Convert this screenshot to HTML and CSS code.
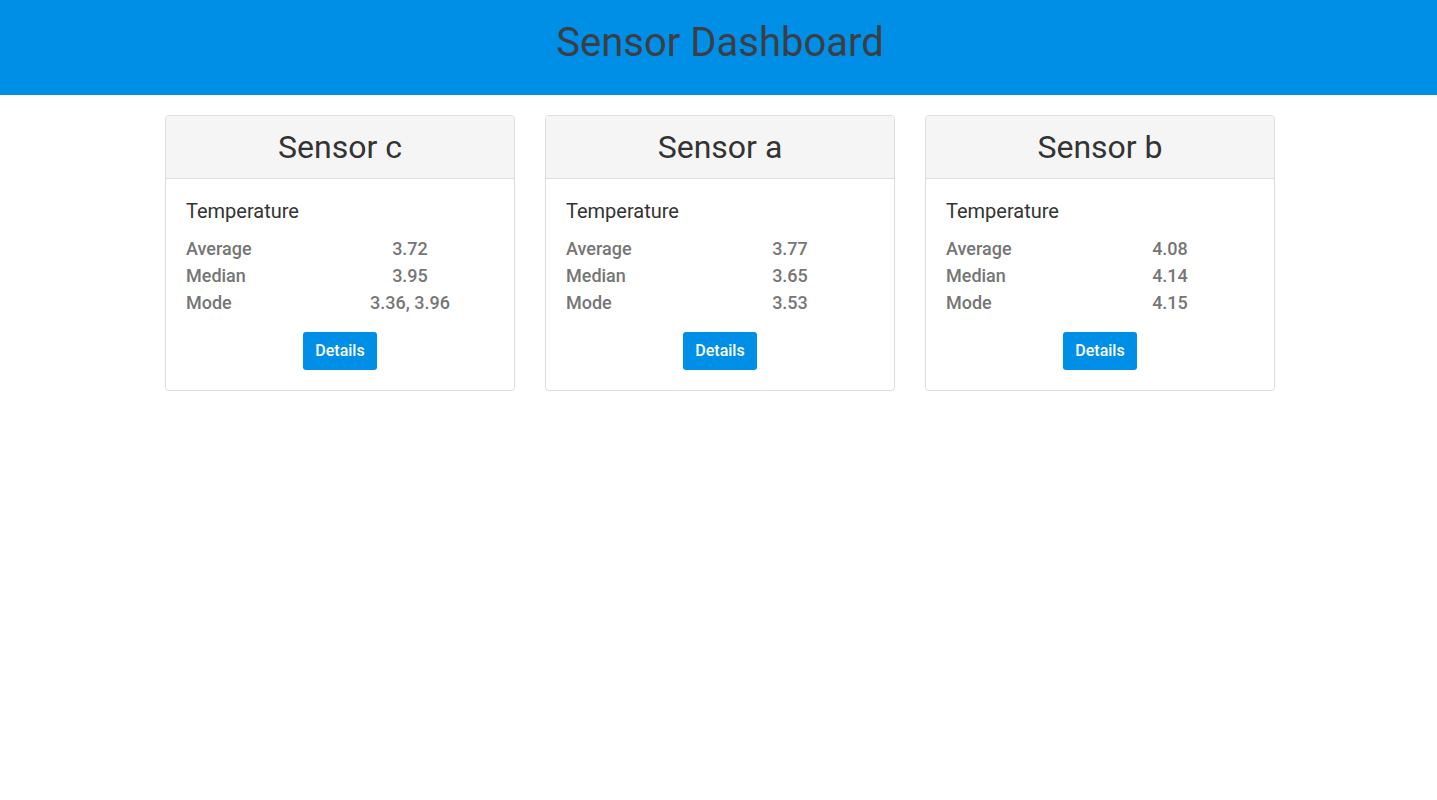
FILE: index.html
```html
<!DOCTYPE html>
<html>
<head>
<meta charset="utf-8">
<link rel="stylesheet" href="styles.css">
</head>
<body>
<header class="topbar"><h1 class="title">Sensor Dashboard</h1></header>
<main class="cards">
  <section class="card">
    <div class="card-head"><h2>Sensor c</h2></div>
    <div class="card-body">
      <h3 class="metric">Temperature</h3>
      <div class="stats">
        <span class="label">Average</span><span class="value">3.72</span>
        <span class="label">Median</span><span class="value">3.95</span>
        <span class="label">Mode</span><span class="value">3.36, 3.96</span>
      </div>
      <div class="actions"><button class="btn">Details</button></div>
    </div>
  </section>
  <section class="card">
    <div class="card-head"><h2>Sensor a</h2></div>
    <div class="card-body">
      <h3 class="metric">Temperature</h3>
      <div class="stats">
        <span class="label">Average</span><span class="value">3.77</span>
        <span class="label">Median</span><span class="value">3.65</span>
        <span class="label">Mode</span><span class="value">3.53</span>
      </div>
      <div class="actions"><button class="btn">Details</button></div>
    </div>
  </section>
  <section class="card">
    <div class="card-head"><h2>Sensor b</h2></div>
    <div class="card-body">
      <h3 class="metric">Temperature</h3>
      <div class="stats">
        <span class="label">Average</span><span class="value">4.08</span>
        <span class="label">Median</span><span class="value">4.14</span>
        <span class="label">Mode</span><span class="value">4.15</span>
      </div>
      <div class="actions"><button class="btn">Details</button></div>
    </div>
  </section>
</main>
</body>
</html>
```
FILE: styles.css
```css
* { box-sizing: border-box; }
body {
  margin: 0;
  font-family: Roboto, "Liberation Sans", sans-serif;
  color: #333;
  background: #fff;
}
.topbar {
  background: #008fe6;
  height: 95px;
  display: flex;
  justify-content: center;
  align-items: center;
  padding-left: 3px;
}
.title {
  margin: 0;
  font-size: 40px;
  font-weight: 400;
  color: #3b3f45;
  padding-bottom: 10px;
}
.cards {
  display: flex;
  justify-content: center;
  gap: 30px;
  padding-top: 20px;
  padding-left: 3px;
}
.card {
  width: 350px;
  border: 1px solid #ddd;
  border-radius: 4px;
  overflow: hidden;
}
.card-head {
  background: #f5f5f5;
  border-bottom: 1px solid #ddd;
  height: 63px;
  display: flex;
  justify-content: center;
  align-items: center;
}
.card-head h2 {
  margin: 0;
  font-size: 32px;
  font-weight: 400;
  color: #333;
}
.card-body {
  padding: 20px 20px 20px;
}
.metric {
  margin: 0 0 12px;
  font-size: 20px;
  font-weight: 400;
  color: #333;
  line-height: 24px;
}
.stats {
  display: grid;
  grid-template-columns: 140px 1fr;
  font-size: 18px;
  line-height: 27px;
  color: #767676;
  font-weight: 500;
}
.value { text-align: center; }
.actions {
  display: flex;
  justify-content: center;
  margin-top: 16px;
}
.btn {
  font-family: Roboto, "Liberation Sans", sans-serif;
  background: #008fe6;
  color: #fff;
  border: 0;
  border-radius: 3px;
  font-size: 16px;
  font-weight: 500;
  height: 38px;
  width: 74px;
  padding: 0 0 2px;
}
```
